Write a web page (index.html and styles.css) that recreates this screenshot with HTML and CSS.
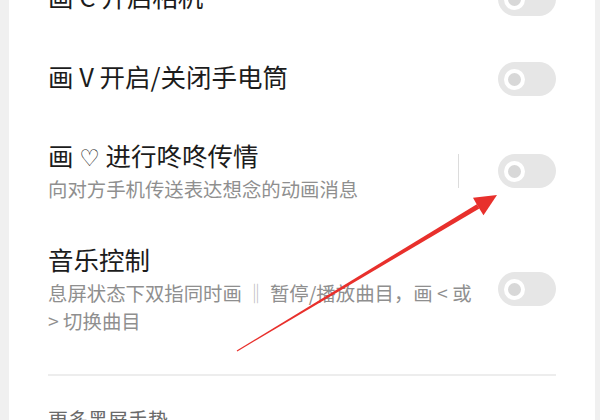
FILE: index.html
```html
<!DOCTYPE html>
<html lang="zh-CN">
<head>
<meta charset="utf-8">
<link rel="stylesheet" href="styles.css">
</head>
<body>
<div class="card">
  <div class="row">
    <div class="text"><div class="title">画 C 开启相机</div></div>
    <div class="ctrl"><span class="toggle"></span></div>
  </div>
  <div class="row">
    <div class="text"><div class="title">画 V 开启/关闭手电筒</div></div>
    <div class="ctrl"><span class="toggle"></span></div>
  </div>
  <div class="row sub">
    <div class="text">
      <div class="title">画 <span class="sym">♡</span> 进行咚咚传情</div>
      <div class="desc">向对方手机传送表达想念的动画消息</div>
    </div>
    <div class="ctrl"><span class="vline"></span><span class="toggle"></span></div>
  </div>
  <div class="row sub">
    <div class="text">
      <div class="title">音乐控制</div>
      <div class="desc">息屏状态下双指同时画 <span class="bars">‖</span> 暂停/播放曲目，画 &lt; 或<br>&gt; 切换曲目</div>
    </div>
    <div class="ctrl"><span class="toggle"></span></div>
  </div>
  <div class="divider"></div>
  <div class="section">更多黑屏手势</div>
</div>
<svg class="arrow" width="600" height="420" viewBox="0 0 600 420">
  <polygon points="236.7,350.6 237.3,351.4 479.4,208.4 476.8,204.2" fill="#e8302c"/>
  <polygon points="497,195 473,197.8 477.5,205.8 483.5,215.2" fill="#e8302c"/>
</svg>
</body>
</html>
```
FILE: styles.css
```css
html, body {
  margin: 0;
  padding: 0;
}
body {
  width: 600px;
  height: 420px;
  overflow: hidden;
  background: #f0f0f0;
  font-family: "Noto Sans CJK SC", "Noto Sans", "DejaVu Sans", sans-serif;
  position: relative;
}
.card {
  background: #ffffff;
  margin: -41px 5px 0 9px;
  padding: 0 39px;
  height: 500px;
}
.row {
  display: flex;
  align-items: center;
  justify-content: space-between;
  padding: 23px 0;
}
.row.sub {
  padding: 23px 0 16px;
}
.text {
  flex: 1;
  min-width: 0;
  margin-top: -4px;
  margin-bottom: 4px;
}
.title {
  font-size: 25.5px;
  line-height: 33px;
  height: 33px;
  color: #1c1c1c;
  white-space: nowrap;
}
.sym {
  font-family: "DejaVu Sans", sans-serif;
  font-size: 23px;
  line-height: 1;
}
.desc {
  margin-top: 4px;
  font-size: 19.4px;
  line-height: 28px;
  color: #8f8f8f;
  white-space: nowrap;
}
.bars {
  color: #b8b8b8;
  line-height: 1;
}
.ctrl {
  display: flex;
  align-items: center;
  flex: none;
}
.sub .ctrl {
  margin-bottom: 7px;
}
.vline {
  width: 1px;
  height: 34px;
  background: #dcdcdc;
  margin-right: 39px;
}
.toggle {
  display: flex;
  align-items: center;
  width: 58px;
  height: 34px;
  border-radius: 17px;
  background: #e6e6e6;
  padding-left: 6px;
  box-sizing: border-box;
}
.toggle::after {
  content: "";
  width: 13px;
  height: 13px;
  border: 4px solid #ffffff;
  border-radius: 50%;
  background: #d8d8d8;
}
.divider {
  margin-top: 19px;
  height: 2px;
  background: #ededed;
}
.section {
  margin-top: 30px;
  font-size: 20px;
  line-height: 28px;
  color: #6a6a6a;
}
.arrow {
  position: absolute;
  left: 0;
  top: 0;
}
```
